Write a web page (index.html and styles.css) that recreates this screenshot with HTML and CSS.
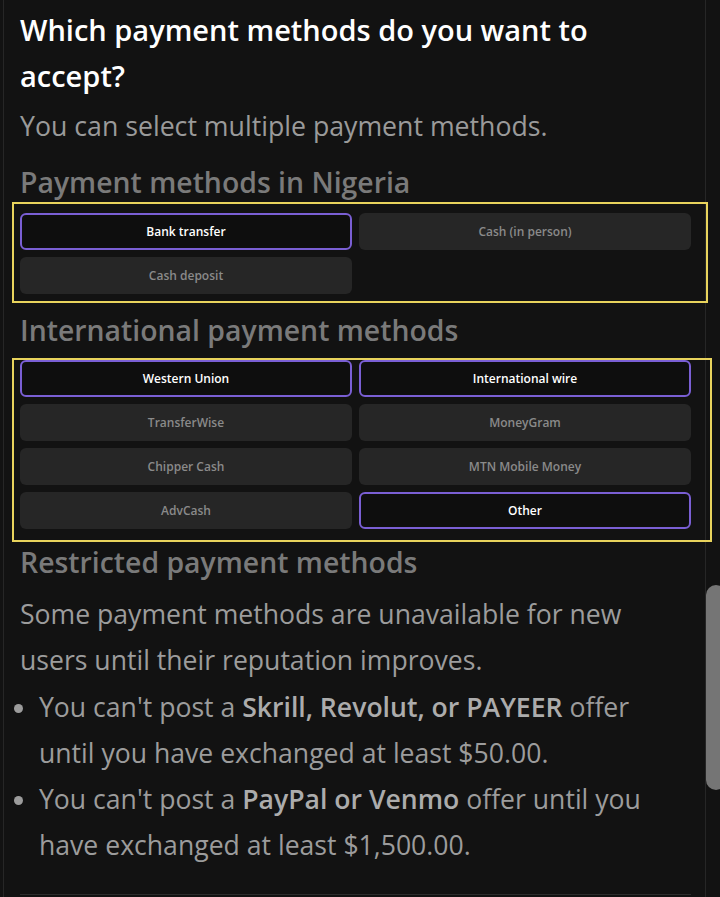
FILE: index.html
```html
<!DOCTYPE html>
<html>
<head>
<meta charset="utf-8">
<meta name="viewport" content="width=device-width, initial-scale=1.0">
<title>Payment methods</title>
<link rel="stylesheet" href="styles.css">
</head>
<body>
	<div class="card">
		<h2 class="title">Which payment methods do you want to accept?</h2>
		<p class="sub">You can select multiple payment methods.</p>

		<h3 class="group-title group-local">Payment methods in Nigeria</h3>
		<div class="highlight hl-local">
			<div class="methods">
				<button class="method active">Bank transfer</button>
				<button class="method">Cash (in person)</button>
				<button class="method">Cash deposit</button>
			</div>
		</div>

		<h3 class="group-title group-intl">International payment methods</h3>
		<div class="highlight hl-intl">
			<div class="methods">
				<button class="method active">Western Union</button>
				<button class="method active">International wire</button>
				<button class="method">TransferWise</button>
				<button class="method">MoneyGram</button>
				<button class="method">Chipper Cash</button>
				<button class="method">MTN Mobile Money</button>
				<button class="method">AdvCash</button>
				<button class="method active">Other</button>
			</div>
		</div>

		<h3 class="group-title group-restricted">Restricted payment methods</h3>
		<p class="note">Some payment methods are unavailable for new users until their reputation improves.</p>
		<ul class="rules">
			<li>You can't post a <b>Skrill, Revolut, or PAYEER</b> offer until you have exchanged at least $50.00.</li>
			<li>You can't post a <b>PayPal or Venmo</b> offer until you have exchanged at least $1,500.00.</li>
		</ul>
		<div class="divider"></div>
	</div>
	<div class="scroll-thumb"></div>
</body>
</html>
```

FILE: styles.css
```css
* {
	box-sizing: border-box;
}

html, body {
	margin: 0;
	padding: 0;
	background: #121212;
}

body {
	font-family: "Open Sans", "Liberation Sans", sans-serif;
	overflow: hidden;
	height: 897px;
}

.card {
	margin-left: 3px;
	width: 703px;
	min-height: 897px;
	padding: 7px 14px 0 16px;
	border-left: 1px solid #262626;
	border-right: 1px solid #262626;
}

.title {
	margin: 0;
	font-size: 29px;
	font-weight: 600;
	line-height: 46px;
	color: #fff;
}

.sub {
	margin: 4px 0 0;
	font-size: 26.7px;
	line-height: 46px;
	color: #9a9a9a;
}

.group-title {
	margin: 0;
	font-size: 28.4px;
	font-weight: 600;
	line-height: 40px;
	color: #7a7a7a;
}

.group-local {
	margin-top: 13px;
}

.group-intl {
	margin-top: 7px;
	margin-bottom: 8px;
}

.highlight {
	border: 2px solid #e8d35c;
}

.hl-local {
	margin: 0 -17px 0 -8px;
	padding: 9px 15px 7px 6px;
}

.hl-intl {
	margin: 0 -21px 0 -8px;
	padding: 0 19px 11px 6px;
}

.methods {
	display: grid;
	grid-template-columns: 1fr 1fr;
	gap: 7px;
}

.method {
	height: 37px;
	border: 2px solid transparent;
	border-radius: 6px;
	background: #262626;
	color: #8a8a8a;
	font-family: inherit;
	font-size: 12px;
	font-weight: 600;
	padding: 0;
}

.method.active {
	background: #0e0e0e;
	border-color: #7a5fd4;
	color: #fff;
}

.note {
	margin: 9px 0 0;
	font-size: 26.6px;
	line-height: 46px;
	color: #9c9c9c;
}

.rules {
	margin: 1px 0 0;
	padding-left: 19px;
	font-size: 26.6px;
	line-height: 46px;
	color: #9c9c9c;
}

.rules b {
	font-weight: 600;
	color: #acacac;
}

.divider {
	margin-top: 26px;
	height: 1px;
	background: #2c2c2c;
}

/* phone overlay scrollbar */
.scroll-thumb {
	position: fixed;
	left: 706px;
	top: 585px;
	width: 20px;
	height: 205px;
	border-radius: 13px;
	background: #757575;
}
```
